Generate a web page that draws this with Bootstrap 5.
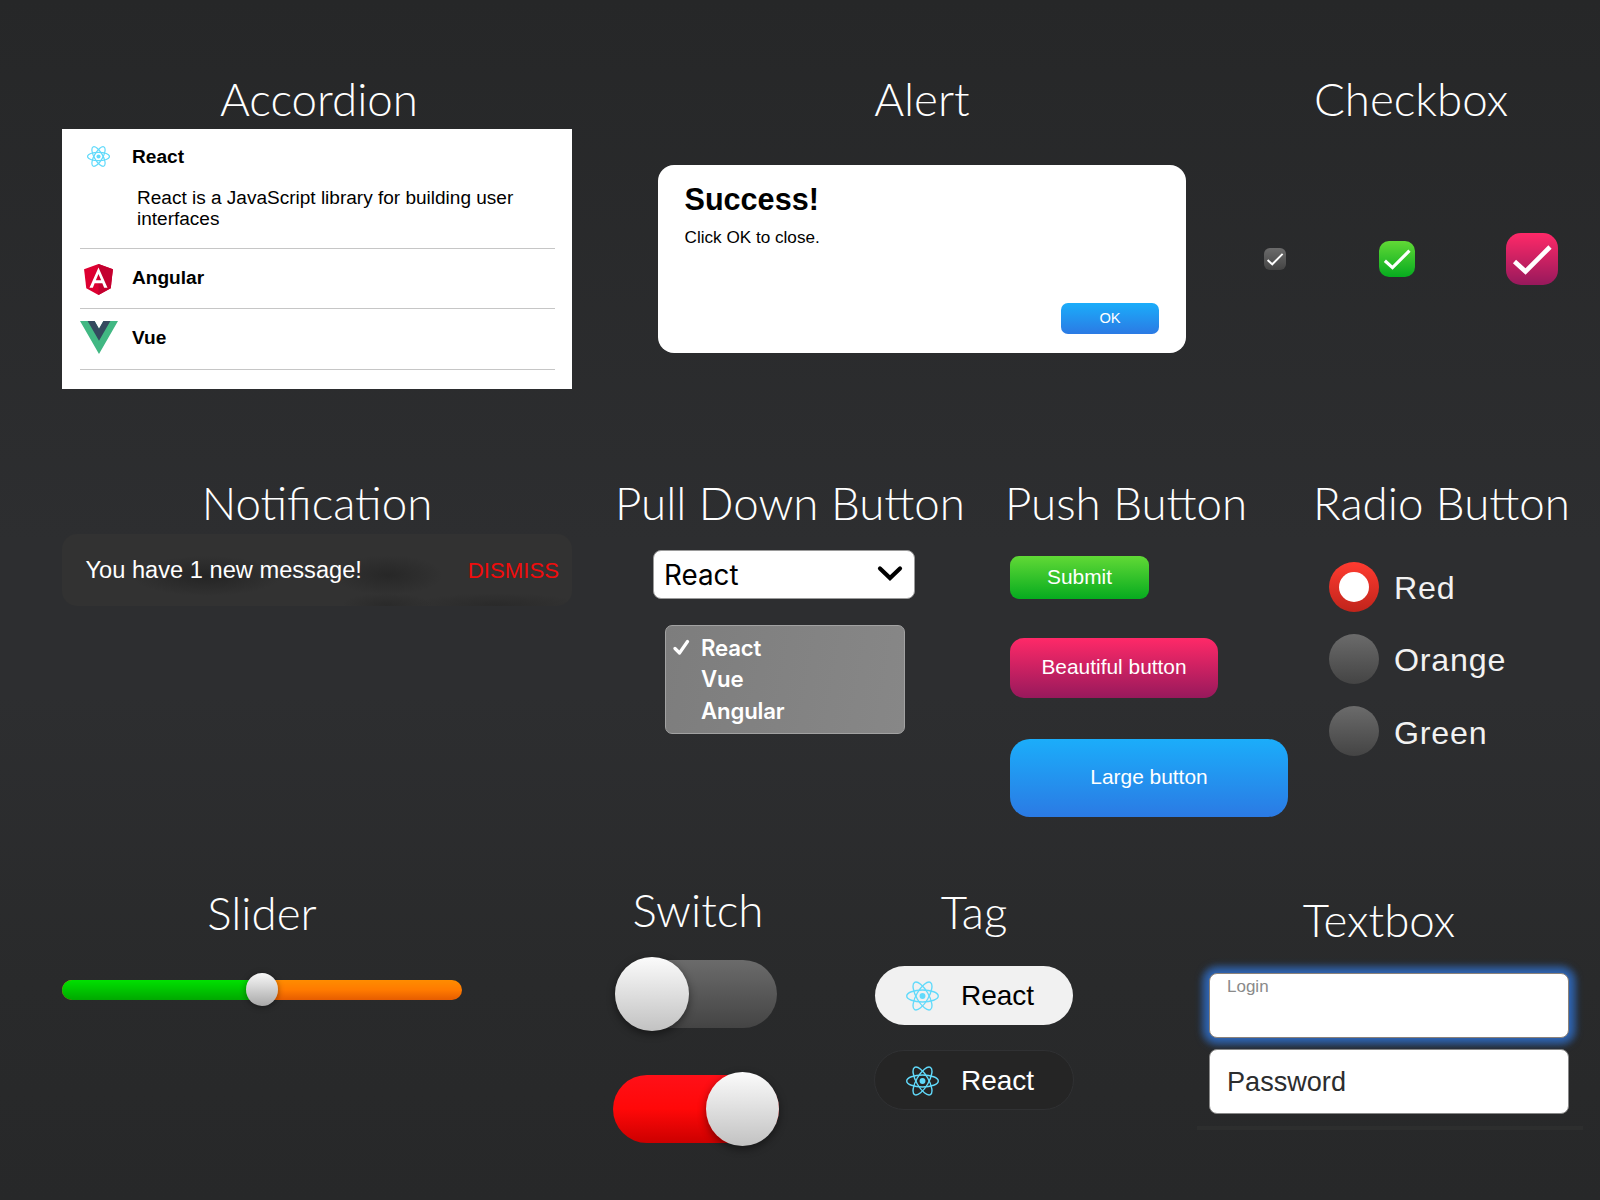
<!DOCTYPE html>
<html lang="en">
<head>
<meta charset="utf-8">
<title>UI Components</title>
<meta name="viewport" content="width=device-width, initial-scale=1">
<link href="https://cdn.jsdelivr.net/npm/bootstrap@5.3.0/dist/css/bootstrap.min.css" rel="stylesheet">
<style>
  body { font-family: "Liberation Sans", Arial, sans-serif; background: #2b2c2e; color: #fff; }
  .board { width: 1600px; height: 1200px; overflow: hidden; background: linear-gradient(#262728 0, #2d2e30 45%, #2d2e30 58%, #292a2b 82%, #272829 100%); }
  .band { height: 400px; }
  .title { font: 300 45.7px/54px Lato, sans-serif; margin: 0; white-space: nowrap; text-align: center; }
  .c-510 { width: 510px; margin-left: 62px; }
  .pt-row1 { padding-top: 72px; }
  .pt-row2 { padding-top: 76px; }
  .grad-green { background: linear-gradient(#61d936, #06ab1f); }
  .grad-pink { background: linear-gradient(#ff2968, #97195c); }
  .grad-blue { background: linear-gradient(#1badfa, #2b7ae4); }
  .grad-gray { background: linear-gradient(#6b6b6b, #444); }

  .acc { background: #fff; color: #000; height: 260px; margin-top: 3px; padding: 0 17px 0 18px; font-size: 19.1px; }
  .acc-item { border-bottom: 1px solid #c6c6c6; height: 60.6px; }
  .acc-item.open { height: 119.7px; }
  .acc-head { height: 57px; }
  .open .acc-head { height: 54px; }
  .acc-icon { width: 37px; margin-right: 15px; }
  .acc-head b { line-height: 24px; padding-top: 1px; }
  .open .acc-head b { padding-top: 2px; }
  .acc-text { line-height: 21.3px; margin: 3.5px 0 0 57px; width: 390px; font-size: 19.03px; }

  .dlg { width: 528px; height: 188px; border-radius: 16px; background: #fff; color: #000; margin-top: 39px; padding: 16px 27px 19px 26.5px; }
  .dlg-title { font-size: 30.6px; line-height: 36px; }
  .dlg-text { font-size: 17.15px; line-height: 22px; margin-top: 9px; }
  .btn.dlg-ok { width: 98px; height: 31px; border-radius: 7px; font-size: 14.7px; line-height: 29px; padding: 0; border: 0; color: #fff; }

  .checks { margin-top: 107px; }
  .checks svg:nth-child(1) { border-radius: 6px; }
  .checks svg:nth-child(2) { border-radius: 10px; margin-left: 2px; }
  .checks svg:nth-child(3) { border-radius: 15px; }

  .toast-bar { height: 72px; border-radius: 15px; margin-top: 4px; padding: 0 13px 0 23.5px; font-size: 23.65px; line-height: 28px;
    background: radial-gradient(ellipse 75px 20px at 145px 42px, #242424, #24242400),
      radial-gradient(ellipse 55px 20px at 326px 41px, #272727, #27272700),
      radial-gradient(ellipse 45px 12px at 325px 71px, #2a2a2a, #2a2a2a00),
      radial-gradient(ellipse 85px 12px at 435px 71px, #2a2a2a, #2a2a2a00), #323232; }
  .toast-bar .dismiss { color: #f00c0c; font-size: 22.2px; padding-top: 1px; }

  .pick { width: 262px; height: 49px; background: #fff; border: 1px solid #9a9a9a; border-radius: 8px; color: #000; font: 400 27.8px/48px Inter, sans-serif; padding: 0 10px; margin: 19.5px 0 0 36px; }
  .pick span { padding-top: 2px; }
  .menu { width: 240px; height: 109px; margin: 26.5px 0 0 48px; border-radius: 7px; background: linear-gradient(100deg, #7d7d7d, #878787); border: 1px solid #a2a2a2; font: 600 22.2px/31.6px Inter, sans-serif; letter-spacing: -.15px; padding: 5.5px 0 0 7px; }
  .menu .tick { width: 17px; margin-right: 11px; }

  .btn.push { font-size: 20.9px; color: #fff; border: 0; padding: 0 0 2px; display: block; }
  .p-s { width: 139px; height: 43px; border-radius: 9px; margin-top: 26px; }
  .p-m { width: 208px; height: 60px; border-radius: 14px; margin-top: 39px; }
  .p-l { width: 278px; height: 78px; border-radius: 20px; margin-top: 41px; }

  .opt { font-size: 32.2px; letter-spacing: .8px; line-height: 36px; height: 50px; margin: 0 0 22px 13px; color: #f2f2f2; }
  .dot { width: 50px; height: 50px; border-radius: 50%; margin-right: 15px; padding: 10px; }
  .dot.on { background: linear-gradient(#ff3b30, #c0241b); }
  .dot.on i { display: block; width: 30px; height: 30px; border-radius: 50%; background: #fff; }
  .opt span { padding-top: 2px; }
  .opt:last-child span { padding-top: 4px; }

  .rail { height: 20px; border-radius: 10px; margin-top: 40px; background: linear-gradient(#ff8c00, #ff7a00 50%, #e65c00); }
  .rail .fill { width: 200px; height: 20px; border-radius: 10px 0 0 10px; background: linear-gradient(#00e000, #00a800); }
  .knob { background: linear-gradient(#fbfbfb, #c2c2c2); border-radius: 50%; flex: none; }
  .rail .knob { width: 32px; height: 33px; margin: -1px 0 0 -16px; background: linear-gradient(#f8f8f8, #a8a8a8); box-shadow: 0 1px 6px #0006; }

  .sw { height: 68px; border-radius: 34px; }
  .sw .knob { width: 74px; height: 74px; box-shadow: 0 3px 8px #0007; }
  .sw-off { width: 162px; margin: 23px 0 0 2px; }
  .sw-on { width: 166px; margin-top: 47px; background: linear-gradient(#ff1018, #ff0808 50%, #cc0000); }
  .sw-on .knob { width: 73px; }

  .chip { width: 198px; height: 59px; border-radius: 30px; padding-left: 31px; font-size: 28px; margin-left: 1px; }
  .chip svg { margin-right: 22px; }
  .chip-light { background: #f1f1f1; color: #000; margin-top: 27px; }
  .chip-dark { background: #252525; border: 1px solid #303133; width: 200px; height: 60px; margin: 25px 0 0; padding-top: 1px; }

  .field { width: 360px; height: 65px; background: #fff; border: 1px solid #888; border-radius: 8px; padding: 0 17px; }
  .field.focus { margin-top: 26px; border-color: #8c8279; box-shadow: 0 0 9px 5px #2f69bc, 0 0 5px 8px #2f6fd026; color: #8a8a8a; font-size: 17px; line-height: 25px; }
  .field.plain { margin-top: 11px; color: #2c2d2e; font-size: 27.1px; line-height: 64px; }
  .rule { width: 386px; height: 4px; background: #2d2e2e; margin: 12px 0 0 -12px; }
</style>
<script src="https://cdn.jsdelivr.net/npm/bootstrap@5.3.0/dist/js/bootstrap.bundle.min.js"></script>
</head>
<body>
<svg width="0" height="0" class="position-absolute" aria-hidden="true">
  <symbol id="react" viewBox="-11.5 -10.23 23 20.46">
    <circle r="2.05" fill="#61dafb"/>
    <g fill="none" stroke="#61dafb"><ellipse rx="11" ry="4.2"/><ellipse rx="11" ry="4.2" transform="rotate(60)"/><ellipse rx="11" ry="4.2" transform="rotate(120)"/></g>
  </symbol>
  <symbol id="tick" viewBox="0 0 52 52"><path d="M8.5 28.5 L19.5 38.5 L44 14" fill="none" stroke="#fff" stroke-width="4.6"/></symbol>
</svg>
<main class="board">
  <div class="band d-flex">
    <section class="c-510 pt-row1">
      <h2 class="title ps-1">Accordion</h2>
      <div class="acc">
        <div class="acc-item open">
          <div class="acc-head d-flex align-items-center"><div class="acc-icon d-flex justify-content-center"><svg width="23" height="21" stroke-width="1.25"><use href="#react"/></svg></div><b>React</b></div>
          <div class="acc-text">React is a JavaScript library for building user interfaces</div>
        </div>
        <div class="acc-item"><div class="acc-head d-flex align-items-center"><div class="acc-icon d-flex justify-content-center pt-1"><svg width="29" height="31" viewBox="31.9 30 186.2 200"><path fill="#dd0031" d="M125 30 31.9 63.2l14.2 123.1L125 230l78.9-43.7 14.2-123.1z"/><path fill="#c3002f" d="M125 30v200l78.9-43.7 14.2-123.1z"/><path fill="#fff" d="M125 52.1 66.8 182.6h21.7l11.7-29.2h49.4l11.7 29.2H183zm17 83.3h-34l17-40.9z"/></svg></div><b>Angular</b></div></div>
        <div class="acc-item"><div class="acc-head d-flex align-items-center"><div class="acc-icon d-flex justify-content-center"><svg width="38" height="33" class="flex-shrink-0" viewBox="0 0 261.76 226.69"><path fill="#41b883" d="M161.1 0l-30.2 52.35L100.65 0H0l130.87 226.69L261.75 0z"/><path fill="#34495e" d="M161.1 0l-30.2 52.35L100.65 0h-48.3l78.53 136L209.4 0z"/></svg></div><b>Vue</b></div></div>
      </div>
    </section>
    <section class="pt-row1" style="margin-left:86px">
      <h2 class="title">Alert</h2>
      <div class="dlg d-flex flex-column">
        <div class="dlg-title fw-bold">Success!</div>
        <div class="dlg-text">Click OK to close.</div>
        <button class="btn dlg-ok grad-blue mt-auto align-self-end">OK</button>
      </div>
    </section>
    <section class="pt-row1" style="margin-left:78px;width:294px">
      <h2 class="title">Checkbox</h2>
      <div class="checks d-flex align-items-center justify-content-between">
        <svg class="grad-gray" width="22" height="22"><use href="#tick"/></svg>
        <svg class="grad-green" width="36" height="36"><use href="#tick"/></svg>
        <svg class="grad-pink" width="52" height="52"><use href="#tick"/></svg>
      </div>
    </section>
  </div>

  <div class="band d-flex">
    <section class="c-510 pt-row2">
      <h2 class="title">Notification</h2>
      <div class="toast-bar d-flex align-items-center justify-content-between"><span>You have 1 new message!</span><span class="dismiss">DISMISS</span></div>
    </section>
    <section class="pt-row2" style="margin-left:45px;width:346px">
      <h2 class="title d-flex justify-content-center">Pull Down Button</h2>
      <div class="pick d-flex justify-content-between align-items-center"><span>React</span><svg width="28" height="20" viewBox="0 0 28 20" fill="none" stroke="#000" stroke-width="4.2" stroke-linecap="round"><path d="M4 4.5l10 9.5 10-9.5"/></svg></div>
      <div class="menu">
        <div class="d-flex align-items-center"><svg class="tick" height="16" viewBox="0 0 17 16" fill="none" stroke="#fff" stroke-width="3.2" stroke-linecap="round" stroke-linejoin="round"><path d="M2 9.5l4.5 4.5L14.5 2.5"/></svg>React</div>
        <div class="d-flex"><span class="tick"></span>Vue</div>
        <div class="d-flex"><span class="tick"></span>Angular</div>
      </div>
    </section>
    <section class="pt-row2" style="margin-left:47px;width:278px">
      <h2 class="title text-start" style="margin-left:-5px">Push Button</h2>
      <button class="btn push p-s grad-green">Submit</button>
      <button class="btn push p-m grad-pink">Beautiful button</button>
      <button class="btn push p-l grad-blue">Large button</button>
    </section>
    <section class="pt-row2" style="margin-left:28px;width:251px">
      <h2 class="title d-flex justify-content-center" style="margin-bottom:32px">Radio Button</h2>
      <div class="opt d-flex align-items-center"><div class="dot on"><i></i></div><span>Red</span></div>
      <div class="opt d-flex align-items-center"><div class="dot grad-gray"></div><span>Orange</span></div>
      <div class="opt d-flex align-items-center"><div class="dot grad-gray"></div><span>Green</span></div>
    </section>
  </div>

  <div class="band d-flex">
    <section style="padding-top:86px;margin-left:62px;width:400px">
      <h2 class="title">Slider</h2>
      <div class="rail d-flex align-items-center"><div class="fill"></div><div class="knob"></div></div>
    </section>
    <section style="padding-top:83px;margin-left:151px;width:166px">
      <h2 class="title ps-1">Switch</h2>
      <div class="sw sw-off grad-gray d-flex align-items-center"><div class="knob"></div></div>
      <div class="sw sw-on d-flex align-items-center justify-content-end"><div class="knob"></div></div>
    </section>
    <section style="padding-top:85px;margin-left:95px;width:200px">
      <h2 class="title">Tag</h2>
      <div class="chip chip-light d-flex align-items-center"><svg width="33" height="30" stroke-width=".95"><use href="#react"/></svg>React</div>
      <div class="chip chip-dark d-flex align-items-center"><svg width="33" height="30"><use href="#react"/></svg>React</div>
    </section>
    <section style="padding-top:93px;margin-left:135px;width:360px">
      <h2 class="title" style="margin-right:20px">Textbox</h2>
      <div class="field focus">Login</div>
      <div class="field plain">Password</div>
      <div class="rule"></div>
    </section>
  </div>
</main>
</body>
</html>
